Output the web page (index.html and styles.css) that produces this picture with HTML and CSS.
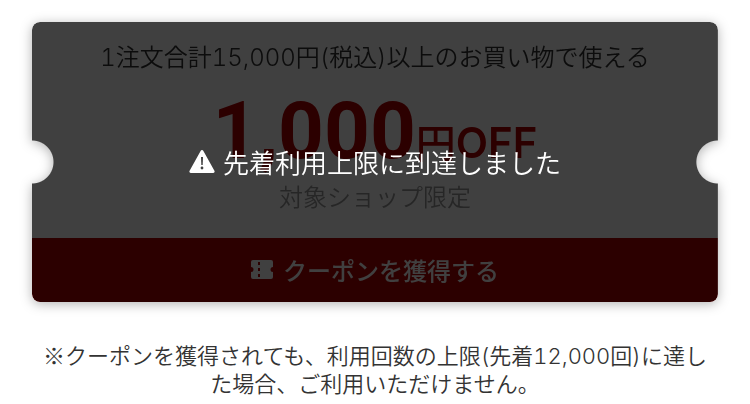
FILE: index.html
```html
<!DOCTYPE html>
<html lang="ja">
  <head>
    <meta charset="UTF-8" />
    <meta name="viewport" content="width=device-width, initial-scale=1.0" />
    <title>クーポン</title>
    <link rel="stylesheet" href="styles.css" />
  </head>
  <body>
    <main class="container">
      <div class="coupon-shadow">
        <section class="coupon">
          <div class="coupon-body">
            <p class="condition">
              <span class="num">1</span>注文合計<span class="num">15,000</span>円<span class="num">(</span>税込<span class="num">)</span>以上のお買い物で使える
            </p>
            <p class="discount">
              <span class="amount">1,000</span><span class="yen">円</span><span class="off">OFF</span>
            </p>
            <p class="target">対象ショップ限定</p>
          </div>
          <button type="button" class="get-button" disabled>
            <svg class="ticket-icon" viewBox="0 0 22 19" aria-hidden="true">
              <path
                fill="currentColor"
                fill-rule="evenodd"
                d="M2 0h18a2 2 0 0 1 2 2v5a2.500 2.500 0 0 0 0 5v5a2 2 0 0 1-2 2H2a2 2 0 0 1-2-2v-5a2.500 2.500 0 0 0 0-5V2a2 2 0 0 1 2-2zM7 2v3h2V2zM7 8v3h2V8zM7 14v3h2v-3z"
              />
            </svg>
            <span>クーポンを獲得する</span>
          </button>
          <div class="overlay">
            <svg class="warning-icon" viewBox="0 0 26 23" aria-hidden="true">
              <path
                fill="#fff"
                d="M11.600 .9a1.600 1.600 0 0 1 2.800 0l11 19.800a1.500 1.500 0 0 1-1.300 2.300H1.900a1.500 1.500 0 0 1-1.300-2.300z"
              />
              <path fill="#404040" d="M12 7h2l-.3 8h-1.400z" />
              <circle fill="#404040" cx="13" cy="18" r="1.400" />
            </svg>
            <span>先着利用上限に到達しました</span>
          </div>
        </section>
      </div>
      <p class="note">
        ※クーポンを獲得されても、利用回数の上限<span class="num">(</span>先着<span class="num">12,000</span>回<span class="num">)</span>に達した場合、ご利用いただけません。
      </p>
    </main>
  </body>
</html>
```
FILE: styles.css
```css
body {
  margin: 0;
  background-color: #fff;
  color: #333;
  font-family: "Noto Sans CJK JP", sans-serif;
  font-weight: 350;
}

p {
  margin: 0;
}

.container {
  padding: 22px 32px 0;
}

.num {
  font-family: Inter, sans-serif;
  font-weight: 300;
  font-variant-numeric: tabular-nums;
  line-height: 1;
}

/* The shadow follows the notched outline of the coupon */
.coupon-shadow {
  filter: drop-shadow(0 2px 6px rgba(0, 0, 0, 0.3));
}

.coupon {
  position: relative;
  border-radius: 8px;
  overflow: hidden;
  background-color: #fff;
  text-align: center;
  -webkit-mask:
    radial-gradient(circle at left center, transparent 21px, #000 22px) left / 51% 100% no-repeat,
    radial-gradient(circle at right center, transparent 21px, #000 22px) right / 51% 100% no-repeat;
  mask:
    radial-gradient(circle at left center, transparent 21px, #000 22px) left / 51% 100% no-repeat,
    radial-gradient(circle at right center, transparent 21px, #000 22px) right / 51% 100% no-repeat;
}

.coupon-body {
  padding: 16px 16px 24px;
}

.condition {
  font-size: 24px;
  line-height: 36px;
}

.discount {
  display: flex;
  justify-content: center;
  align-items: baseline;
  height: 86px;
  color: #b00000;
  font-weight: 700;
  line-height: 114px;
}

.amount {
  font-family: Roboto, sans-serif;
  font-size: 80px;
}

.yen {
  font-size: 40px;
  font-weight: 500;
}

.off {
  font-family: Inter, sans-serif;
  font-size: 42px;
  font-weight: 600;
}

.target {
  padding-top: 18px;
  color: #999;
  font-size: 24px;
  line-height: 36px;
}

.get-button {
  display: flex;
  justify-content: center;
  align-items: center;
  gap: 10px;
  width: 100%;
  height: 64px;
  padding: 0 0 2px;
  border: none;
  background-color: #b00000;
  color: #fff;
  font-family: inherit;
  font-size: 24px;
  font-weight: 500;
}

.ticket-icon {
  width: 22px;
  height: 19px;
}

.overlay {
  position: absolute;
  inset: 0;
  display: flex;
  justify-content: center;
  align-items: center;
  gap: 8px;
  padding-bottom: 2px;
  background-color: rgba(0, 0, 0, 0.75);
  color: #fff;
  font-size: 26px;
}

.warning-icon {
  width: 26px;
  height: 23px;
}

.note {
  padding: 38px 10px 0;
  font-size: 22px;
  line-height: 28px;
  text-align: center;
}
```
